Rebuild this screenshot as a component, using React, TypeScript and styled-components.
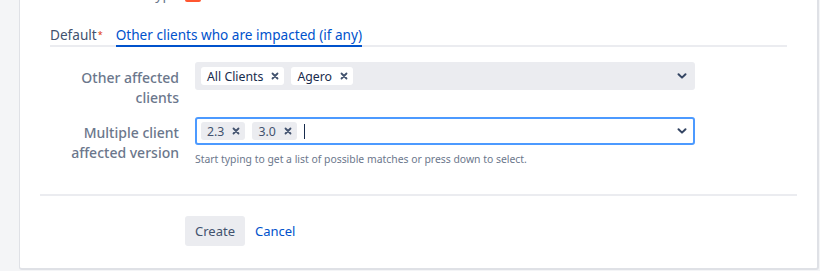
import React from 'react';
import styled, { createGlobalStyle } from 'styled-components';

const GlobalStyle = createGlobalStyle`
  html, body {
    margin: 0;
    padding: 0;
    background: #f4f5f7;
    font-family: 'Noto Sans', 'Open Sans', 'Liberation Sans', sans-serif;
    overflow: hidden;
  }
`;

const Page = styled.div`
  display: flex;
  height: 271px;
  padding-left: 19px;
  padding-right: 1px;
  box-sizing: border-box;
`;

const Panel = styled.div`
  flex: 1;
  height: 270px;
  box-sizing: border-box;
  background: #fff;
  border-left: 1px solid #dfe1e6;
  border-right: 2px solid #dfe1e6;
  border-bottom: 2px solid #dfe1e6;
  border-bottom-left-radius: 3px;
  border-bottom-right-radius: 3px;
  padding: 0 20px;
  overflow: hidden;
`;

const TopRow = styled.div`
  display: flex;
  align-items: flex-end;
  gap: 6px;
  height: 16px;
  margin-top: -14px;
  padding-left: 10px;
`;

const TopLabel = styled.div`
  width: 129px;
  text-align: right;
  font-size: 14px;
  line-height: 16px;
  color: #6b778c;
`;

const TypeIcon = styled.div`
  width: 16px;
  height: 16px;
  border-radius: 2px;
  background: #ff5630;
`;

const Tabs = styled.div`
  display: flex;
  gap: 13px;
  margin: 23px 10px 0;
  border-bottom: 2px solid #ebecf0;
`;

const Tab = styled.div<{ active?: boolean }>`
  font-size: 13.6px;
  line-height: 20px;
  margin-bottom: -2px;
  color: ${({ active }) => (active ? '#0052cc' : '#42526e')};
  border-bottom: 2px solid ${({ active }) => (active ? '#0052cc' : 'transparent')};
`;

const Req = styled.span`
  color: #de350b;
  font-size: 9px;
  vertical-align: top;
  margin-left: 1px;
`;

const Form = styled.div`
  padding: 15px 10px 0;
`;

const Field = styled.div<{ gapBelow: number }>`
  display: grid;
  grid-template-columns: 129px 500px;
  column-gap: 16px;
  margin-bottom: ${({ gapBelow }) => gapBelow}px;
`;

const Label = styled.label`
  text-align: right;
  font-size: 14px;
  font-weight: 500;
  line-height: 20px;
  color: #6b778c;
  padding-top: 6px;
`;

const Control = styled.div`
  display: flex;
  flex-direction: column;
`;

const Select = styled.div<{ focused?: boolean }>`
  display: flex;
  align-items: center;
  gap: 7px;
  height: 28px;
  box-sizing: border-box;
  padding: 0 5px 0 4px;
  border-radius: 3px;
  background: ${({ focused }) => (focused ? '#fff' : '#ebecf0')};
  border: 2px solid ${({ focused }) => (focused ? '#4c9aff' : '#ebecf0')};
`;

const Tag = styled.span<{ light?: boolean }>`
  display: inline-flex;
  align-items: center;
  gap: 8px;
  height: 18px;
  padding: 0 5px 0 6px;
  border-radius: 3px;
  font-size: 12.3px;
  color: ${({ light }) => (light ? '#172b4d' : '#42526e')};
  background: ${({ light }) => (light ? '#fff' : '#ebecf0')};
`;

const Caret = styled.span`
  width: 1px;
  height: 15px;
  background: #172b4d;
`;

const Spacer = styled.div`
  flex: 1;
`;

const Help = styled.div`
  margin-top: 7px;
  font-size: 10.4px;
  line-height: 14px;
  color: #6b778c;
`;

const Divider = styled.div`
  height: 2px;
  background: #ebecf0;
  margin-top: 28px;
`;

const Actions = styled.div`
  display: flex;
  align-items: center;
  gap: 10px;
  margin-top: 20px;
  padding-left: 145px;
`;

const Button = styled.button`
  height: 30px;
  padding: 0 10px;
  border: none;
  border-radius: 3px;
  background: #ebecf0;
  color: #42526e;
  font-family: inherit;
  font-size: 13px;
`;

const Link = styled.a`
  color: #0052cc;
  font-size: 13px;
  text-decoration: none;
`;

const Chevron = () => (
  <svg width="12" height="12" viewBox="0 0 12 12">
    <path d="M2.5 4.2 L6 7.6 L9.5 4.2" fill="none" stroke="#344563" strokeWidth="2" strokeLinecap="round" strokeLinejoin="round" />
  </svg>
);

const Remove = () => (
  <svg width="8" height="8" viewBox="0 0 8 8">
    <path d="M1.5 1.5 L6.5 6.5 M6.5 1.5 L1.5 6.5" stroke="#42526e" strokeWidth="1.8" strokeLinecap="round" />
  </svg>
);

const App: React.FC = () => {
  return (
    <Page>
      <GlobalStyle />
      <Panel>
        <TopRow>
          <TopLabel>Issue Type</TopLabel>
          <TypeIcon />
        </TopRow>
        <Tabs>
          <Tab>
            Default<Req>*</Req>
          </Tab>
          <Tab active>Other clients who are impacted (if any)</Tab>
        </Tabs>
        <Form>
          <Field gapBelow={9}>
            <Label>Other affected clients</Label>
            <Control>
              <Select>
                <Tag light>
                  All Clients <Remove />
                </Tag>
                <Tag light>
                  Agero <Remove />
                </Tag>
                <Spacer />
                <Chevron />
              </Select>
            </Control>
          </Field>
          <Field gapBelow={0}>
            <Label>Multiple client affected version</Label>
            <Control>
              <Select focused>
                <Tag>
                  2.3 <Remove />
                </Tag>
                <Tag>
                  3.0 <Remove />
                </Tag>
                <Caret />
                <Spacer />
                <Chevron />
              </Select>
              <Help>Start typing to get a list of possible matches or press down to select.</Help>
            </Control>
          </Field>
        </Form>
        <Divider />
        <Actions>
          <Button>Create</Button>
          <Link href="#">Cancel</Link>
        </Actions>
      </Panel>
    </Page>
  );
};

export default App;
